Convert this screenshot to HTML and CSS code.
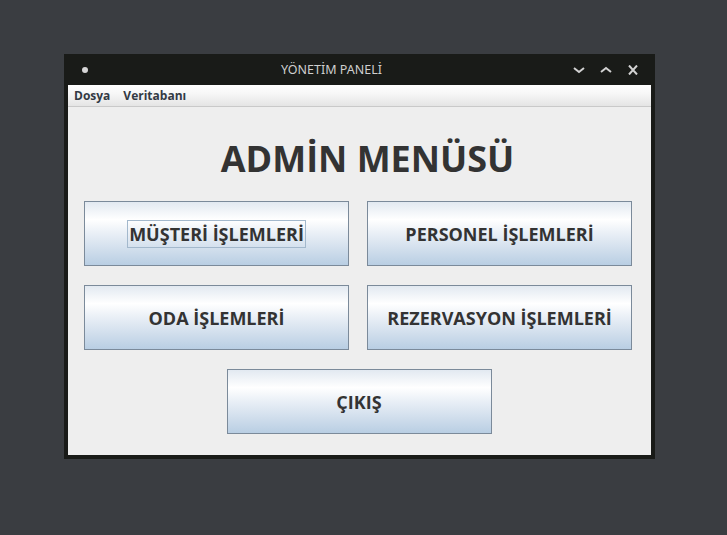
FILE: index.html
```html
<!DOCTYPE html>
<html>
<head>
<meta charset="utf-8">
<link rel="stylesheet" href="styles.css">
</head>
<body>
<div class="desktop">
  <div class="window">
    <div class="titlebar">
      <span class="dot"></span>
      <span class="title">YÖNETİM PANELİ</span>
      <div class="controls">
        <svg width="14" height="10" viewBox="0 0 14 10"><path d="M2 3 L7 7 L12 3" fill="none" stroke="#d2d2d2" stroke-width="2"/></svg>
        <svg width="14" height="10" viewBox="0 0 14 10"><path d="M2 7 L7 3 L12 7" fill="none" stroke="#d2d2d2" stroke-width="2"/></svg>
        <svg width="14" height="10" viewBox="0 0 14 10"><path d="M3 0.5 L11 9.5 M11 0.5 L3 9.5" fill="none" stroke="#d2d2d2" stroke-width="2"/></svg>
      </div>
    </div>
    <div class="menubar">
      <span class="menu">Dosya</span>
      <span class="menu">Veritabanı</span>
    </div>
    <div class="content">
      <h1 class="heading">ADMİN MENÜSÜ</h1>
      <div class="grid">
        <button class="btn"><span class="focus">MÜŞTERİ İŞLEMLERİ</span></button>
        <button class="btn">PERSONEL İŞLEMLERİ</button>
        <button class="btn">ODA İŞLEMLERİ</button>
        <button class="btn">REZERVASYON İŞLEMLERİ</button>
        <button class="btn exit">ÇIKIŞ</button>
      </div>
    </div>
  </div>
</div>
</body>
</html>
```
FILE: styles.css
```css
html, body {
  margin: 0;
  padding: 0;
  background: #3a3d41;
  width: 727px;
  height: 535px;
  overflow: hidden;
}
.desktop {
  padding: 54px 0 0 64px;
}
.window {
  width: 591px;
  height: 405px;
  box-sizing: border-box;
  background: #191b18;
  padding: 0 4px 4px 4px;
  display: flex;
  flex-direction: column;
}
.titlebar {
  height: 31px;
  display: flex;
  align-items: center;
  font-family: "Noto Sans", "DejaVu Sans", sans-serif;
}
.dot {
  width: 6px;
  height: 6px;
  border-radius: 50%;
  background: #d6d6d6;
  margin-left: 14px;
}
.title {
  margin-left: 193px;
  color: #cfcfcf;
  font-size: 12.5px;
  margin-top: -1px;
}
.controls {
  margin-left: auto;
  display: flex;
  gap: 13px;
  margin-right: 11px;
}
.controls svg { display: block; }
.menubar {
  height: 21px;
  border-bottom: 1px solid #c9c9c9;
  background: linear-gradient(to bottom, #ffffff 0%, #f7f7f7 40%, #e4e4e4 100%);
  display: flex;
  align-items: center;
  padding-left: 6px;
  gap: 13px;
  font-family: "Open Sans", "Noto Sans", sans-serif;
  font-weight: bold;
  font-size: 12px;
  color: #333a44;
}
.content {
  flex: 1;
  background: #eeeeee;
  display: flex;
  flex-direction: column;
  align-items: center;
}
.heading {
  margin: 27px 0 0 16px;
  height: 67px;
  line-height: 50px;
  font-family: "Open Sans", "Noto Sans", sans-serif;
  font-size: 36px;
  font-weight: bold;
  color: #333333;
}
.grid {
  align-self: flex-start;
  margin-left: 16px;
  display: grid;
  grid-template-columns: 265px 265px;
  column-gap: 18px;
  row-gap: 19px;
}
.btn {
  width: 265px;
  height: 65px;
  box-sizing: border-box;
  border: 1px solid #7b8a9a;
  background: linear-gradient(to bottom, #e2e9f1 0%, #ffffff 28%, #e9eff6 50%, #b9cee3 100%);
  font-family: "Open Sans", "Noto Sans", sans-serif;
  font-weight: bold;
  font-size: 18px;
  color: #333333;
  padding: 0;
  display: flex;
  align-items: center;
  justify-content: center;
}
.exit {
  grid-column: 1 / span 2;
  justify-self: center;
  margin-left: 2px;
}
.focus {
  border: 1px solid #a3b8cc;
  padding: 2px 1px;
  line-height: 22px;
}
```
